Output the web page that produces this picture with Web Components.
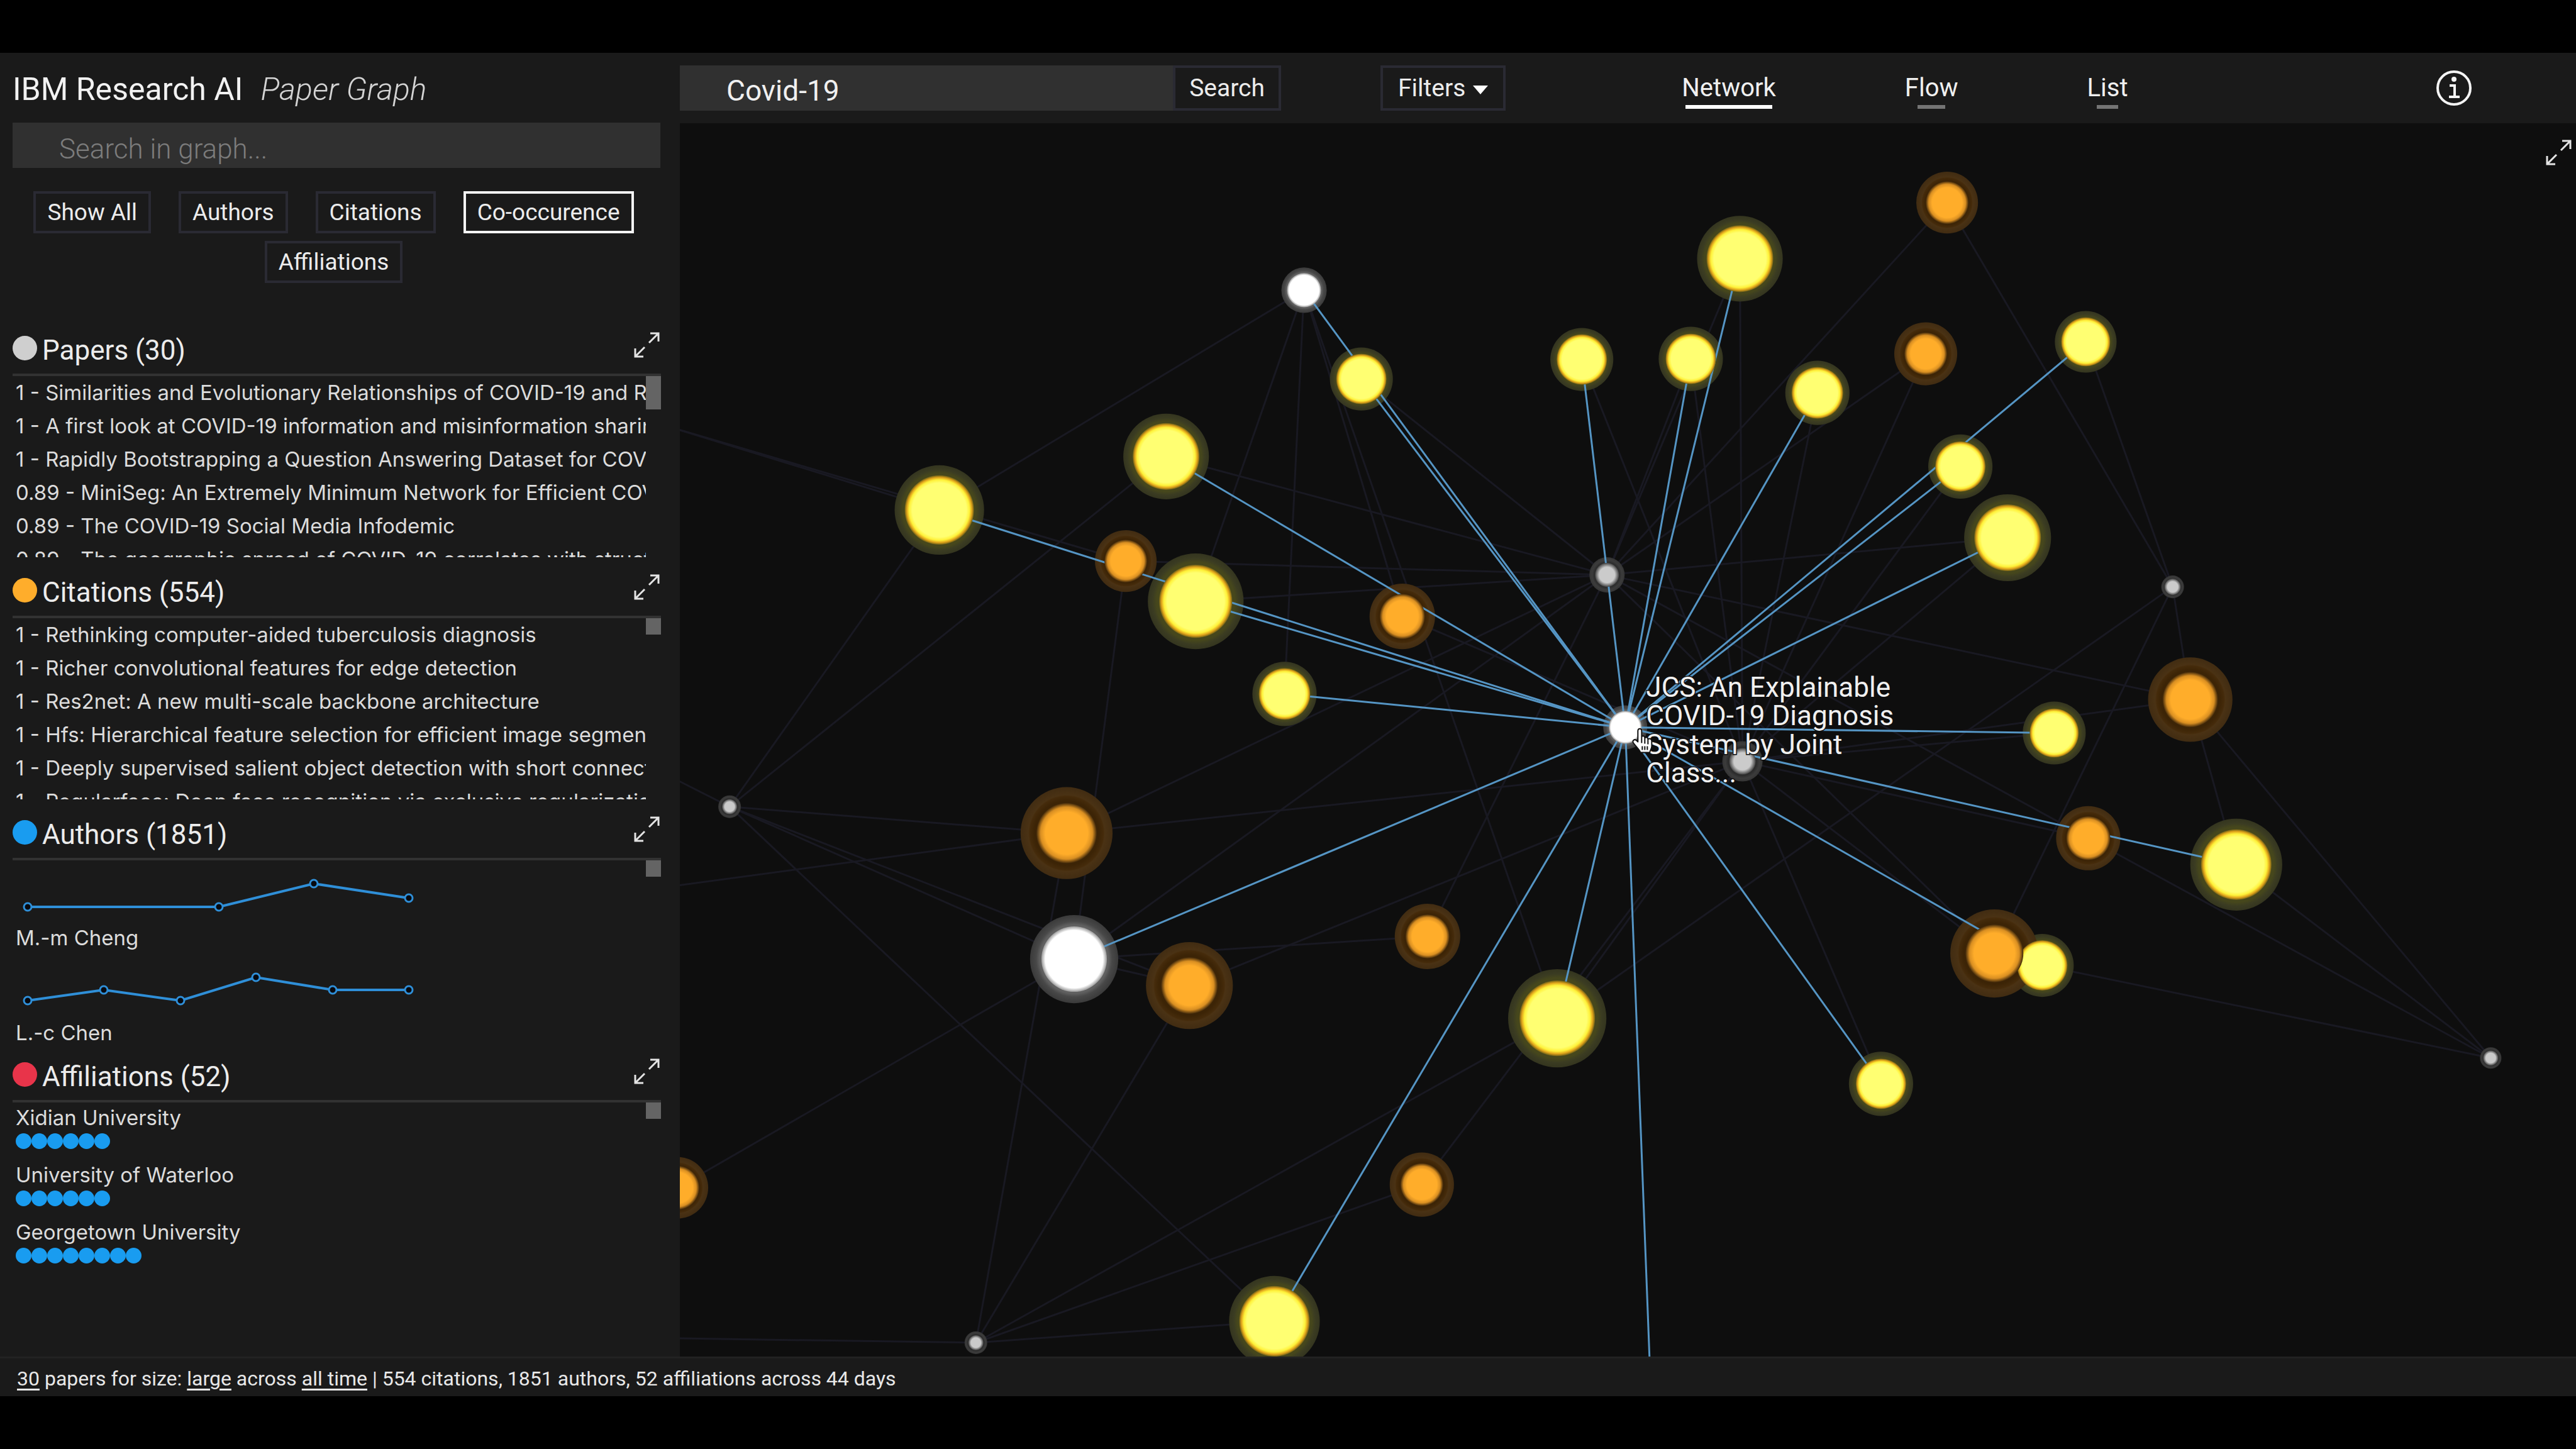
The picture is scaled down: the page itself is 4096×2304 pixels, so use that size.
<!DOCTYPE html>
<html lang="en">
<head>
<meta charset="utf-8">
<title>IBM Research AI Paper Graph</title>
<style>
  html, body { height: 100%; }
  body { margin: 0; background: #000; color: #e8e8e8; font-family: Roboto, "Liberation Sans", sans-serif; }
</style>
</head>
<body>
<paper-graph-app></paper-graph-app>
<script>
const define = (name, html, setup) => {
  const template = document.createElement('template');
  template.innerHTML = html;
  customElements.define(name, class extends HTMLElement {
    constructor() {
      super();
      this.attachShadow({ mode: 'open' }).appendChild(template.content.cloneNode(true));
    }
    connectedCallback() {
      if (setup && !this.ready) { this.ready = true; setup(this, this.shadowRoot); }
    }
  });
};

/* Expand arrows, used by every panel and by the graph */
define('expand-button', `
  <style>
    :host { display: block; }
    button { display: block; margin: 0; padding: 0; border: 0; background: none; cursor: pointer; }
    svg { display: block; width: 41px; height: 41px; fill: none; stroke: #e4e4e4; stroke-width: 3; }
  </style>
  <button type="button" aria-label="Expand">
    <svg viewBox="0 0 41 41"><path d="M26 2H39V15M39 2L24 17M2 26V39H15M2 39L17 24"/></svg>
  </button>`);

/* Outlined text button */
define('text-button', `
  <style>
    :host { display: block; }
    button {
      display: flex; align-items: center; gap: 12px; height: var(--button-height, 67px);
      padding: 0 var(--button-padding, 18px); border: 4px solid #2a2a33; background: #1a1a1a; color: #ececec;
      font: var(--button-size, 37px) Roboto, "Liberation Sans", sans-serif; cursor: pointer;
    }
    :host([active]) button { border-color: #f4f4f4; }
  </style>
  <button type="button"><slot></slot></button>`);

define('side-panel', `
  <style>
    :host { display: block; margin-bottom: 33px; }
    header { display: flex; align-items: flex-start; box-sizing: border-box; height: 64px; border-bottom: 4px solid #323232; }
    .dot { width: 39px; height: 39px; margin-right: 8px; border-radius: 50%; background: var(--dot); }
    h2 { flex: 1; margin: 0; font-size: 44px; line-height: 46px; font-weight: 400; color: #ececec; }
    expand-button { margin: -6px 2px 0 0; }
    .body { display: flex; align-items: flex-start; height: 288px; overflow: hidden; }
    .content { flex: 1; min-width: 0; height: 288px; padding-left: 5px; overflow: hidden; }
    .thumb { width: 24px; height: var(--thumb, 26px); background: #646464; }
  </style>
  <header><span class="dot"></span><h2><slot name="title"></slot></h2><expand-button></expand-button></header>
  <div class="body"><div class="content"><slot></slot></div><div class="thumb"></div></div>`);

define('title-list', `
  <style>
    :host { display: block; }
    ul { margin: 0; padding: 0; list-style: none; font: 33px/53px Inter, "Liberation Sans", sans-serif; color: #dcdcdc; }
    li { white-space: nowrap; }
  </style>
  <ul></ul>`, (el, root) => {
  const ul = root.querySelector('ul');
  for (const text of el.getAttribute('items').split('|')) {
    const li = document.createElement('li');
    li.textContent = text;
    ul.appendChild(li);
  }
});

/* Author with a small publication trend line */
define('author-trend', `
  <style>
    :host { display: block; padding-bottom: 3px; font: 33px/50px Inter, "Liberation Sans", sans-serif; color: #dcdcdc; }
    svg { display: block; width: 660px; height: 98px; fill: none; stroke: #2f8fd8; stroke-width: 4; }
    circle { fill: #07090f; stroke-width: 3; }
  </style>
  <svg viewBox="0 0 660 98"><polyline/></svg><slot></slot>`, (el, root) => {
  const svg = root.querySelector('svg');
  svg.firstChild.setAttribute('points', el.getAttribute('points'));
  for (const pair of el.getAttribute('points').split(' ')) {
    const [x, y] = pair.split(',');
    const c = document.createElementNS('http://www.w3.org/2000/svg', 'circle');
    c.setAttribute('cx', x); c.setAttribute('cy', y); c.setAttribute('r', 6);
    svg.appendChild(c);
  }
});

define('affiliation-row', `
  <style>
    :host { display: block; margin-bottom: 17px; font: 33px/49px Inter, "Liberation Sans", sans-serif; color: #dcdcdc; }
    .dots { display: flex; }
    i { width: 25px; height: 25px; border-radius: 50%; background: #199cf0; }
  </style>
  <slot></slot><div class="dots"></div>`, (el, root) => {
  root.querySelector('.dots').innerHTML = '<i></i>'.repeat(+el.getAttribute('count'));
});

define('graph-sidebar', `
  <style>
    :host { display: block; box-sizing: border-box; padding: 28px 30px 0 20px; background: #1a1a1a; overflow: hidden; }
    h1 { display: flex; align-items: baseline; gap: 28px; margin: 0; font-size: 50px; line-height: 60px; font-weight: 400; color: #f2f2f2; }
    h1 em { font-weight: 300; color: #d4d4d4; }
    input {
      display: block; box-sizing: border-box; width: calc(100% - 1px); height: 72px; margin: 23px 0 37px; padding: 12px 74px 0;
      border: 0; border-radius: 0; background: #303030; color: #e8e8e8; font: 300 44px Roboto, "Liberation Sans", sans-serif;
    }
    input::placeholder { color: #7c7c7c; opacity: 1; }
    .filters { display: flex; flex-wrap: wrap; justify-content: center; gap: 12px 44px; margin: 0 40px 84px 30px; }
  </style>
  <h1>IBM Research AI <em>Paper Graph</em></h1>
  <input type="search" placeholder="Search in graph..." aria-label="Search in graph">
  <div class="filters">
    <text-button>Show All</text-button>
    <text-button>Authors</text-button>
    <text-button>Citations</text-button>
    <text-button active>Co-occurence</text-button>
    <text-button>Affiliations</text-button>
  </div>
  <side-panel style="--dot:#cfcfcf; --thumb:53px">
    <span slot="title">Papers (30)</span>
    <title-list items="1 - Similarities and Evolutionary Relationships of COVID-19 and Related Viruses|1 - A first look at COVID-19 information and misinformation sharing on Twitter|1 - Rapidly Bootstrapping a Question Answering Dataset for COVID-19|0.89 - MiniSeg: An Extremely Minimum Network for Efficient COVID-19 Segmentation|0.89 - The COVID-19 Social Media Infodemic|0.89 - The geographic spread of COVID-19 correlates with structure of social networks"></title-list>
  </side-panel>
  <side-panel style="--dot:#ffad2b">
    <span slot="title">Citations (554)</span>
    <title-list items="1 - Rethinking computer-aided tuberculosis diagnosis|1 - Richer convolutional features for edge detection|1 - Res2net: A new multi-scale backbone architecture|1 - Hfs: Hierarchical feature selection for efficient image segmentation|1 - Deeply supervised salient object detection with short connections|1 - Regularface: Deep face recognition via exclusive regularization"></title-list>
  </side-panel>
  <side-panel style="--dot:#199cf0">
    <span slot="title">Authors (1851)</span>
    <author-trend points="19,74 323,74 474,37 625,60">M.-m Cheng</author-trend>
    <author-trend points="19,72 140,55 262,72 382,35 504,55 625,55">L.-c Chen</author-trend>
  </side-panel>
  <side-panel style="--dot:#e8344a">
    <span slot="title">Affiliations (52)</span>
    <affiliation-row count="6">Xidian University</affiliation-row>
    <affiliation-row count="6">University of Waterloo</affiliation-row>
    <affiliation-row count="8">Georgetown University</affiliation-row>
  </side-panel>`);

define('top-bar', `
  <style>
    :host { display: flex; align-items: center; box-sizing: border-box; height: 112px; padding-right: 165px; background: #1a1a1a; --button-height: 72px; --button-size: 39px; }
    form { display: flex; width: 956px; margin-right: 158px; }
    input {
      flex: 1; min-width: 0; box-sizing: border-box; height: 72px; padding: 8px 74px 0; border: 0; border-radius: 0;
      background: #303030; color: #f0f0f0; font: 46px Roboto, "Liberation Sans", sans-serif;
    }
    form text-button { --button-padding: 22px; }
    .filters { --button-padding: 24px; }
    .filters svg { display: inline-block; width: 24px; height: 14px; margin-left: 12px; vertical-align: middle; fill: #fff; }
    nav { display: flex; gap: 205px; margin-left: 280px; }
    a { display: flex; flex-direction: column; align-items: center; gap: 6px; padding-top: 11px; color: #f0f0f0; font-size: 40px; line-height: 42px; text-decoration: none; }
    a::after { content: ""; width: 52%; height: 6px; background: #747474; }
    a.current::after { width: 92%; background: #fff; }
    .info { margin: 0 0 0 auto; padding: 0; border: 0; background: none; cursor: pointer; }
    .info svg { display: block; width: 58px; height: 58px; }
  </style>
  <form onsubmit="return false">
    <input type="text" value="Covid-19" aria-label="Search papers">
    <text-button>Search</text-button>
  </form>
  <text-button class="filters"><span>Filters<svg viewBox="0 0 24 14"><path d="M0 0H24L12 14Z"/></svg></span></text-button>
  <nav><a class="current" href="#network">Network</a><a href="#flow">Flow</a><a href="#list">List</a></nav>
  <button class="info" type="button" aria-label="Information">
    <svg viewBox="0 0 58 58" fill="none" stroke="#f4f4f4" stroke-width="4"><circle cx="29" cy="29" r="26"/><path d="M22 25H30V43M21 43H38"/><circle cx="29" cy="15" r="4" fill="#f4f4f4" stroke="none"/></svg>
  </button>`);

/* Graph data: kind, centre, halo radius, core radius */
const NODES = {
  W1: ['white', 2071, 461, 36, 27], Y1: ['yellow', 2162, 602, 50, 40], Y2: ['yellow', 2512, 571, 50, 40],
  Y3: ['yellow', 1852, 725, 68, 53], Y4: ['yellow', 1492, 810, 71, 55], O1: ['orange', 1788, 891, 49, 34],
  Y5: ['yellow', 1899, 955, 76, 58], O2: ['orange', 2227, 979, 52, 36], Y6: ['yellow', 2040, 1102, 51, 41],
  G1: ['grey', 2552, 913, 28, 19], G2: ['grey', 2767, 1209, 32, 21], Y7: ['yellow', 2763, 411, 68, 53],
  Y8: ['yellow', 2685, 570, 51, 40], Y9: ['yellow', 2886, 624, 51, 41], O3: ['orange', 3092, 322, 49, 34],
  O4: ['orange', 3058, 562, 50, 34], Y10: ['yellow', 3312, 543, 49, 39], Y11: ['yellow', 3113, 741, 51, 40],
  Y12: ['yellow', 3188, 854, 69, 53], G3: ['grey', 3450, 932, 18, 13], O5: ['orange', 3478, 1111, 67, 44],
  Y13: ['yellow', 3262, 1164, 50, 39], O6: ['orange', 3316, 1331, 51, 35], Y14: ['yellow', 3551, 1373, 73, 56],
  Y15: ['yellow', 3243, 1533, 50, 40], O7: ['orange', 3167, 1514, 70, 46], Y16: ['yellow', 2987, 1721, 51, 40],
  G4: ['grey', 3955, 1680, 17, 12], G5: ['grey', 1159, 1281, 18, 12], O8: ['orange', 1694, 1323, 73, 48],
  W2: ['white', 1706, 1523, 70, 52], O9: ['orange', 1889, 1565, 69, 45], O10: ['orange', 2267, 1487, 52, 35],
  Y17: ['yellow', 2473, 1617, 78, 60], O11: ['orange', 1076, 1886, 49, 35], O12: ['orange', 2258, 1881, 51, 34],
  Y18: ['yellow', 2024, 2098, 72, 56], G6: ['grey', 1550, 2132, 18, 12], H: ['white', 2581, 1155, 35, 26]
};
/* Neighbours that lie outside the visible canvas */
const OUTSIDE = { L1: [1070, 680], L2: [1070, 1236], L3: [1070, 1407], L4: [1070, 2125], B1: [2625, 2300] };
const ACTIVE = 'W1 Y1 Y2 Y3 Y4 Y5 Y6 Y7 Y8 Y9 Y10 Y11 Y12 Y13 Y14 Y15 Y16 Y17 Y18 W2 B1'.split(' ').map(n => 'H-' + n);
const QUIET = ('W1-Y4 W1-Y5 W1-Y6 W1-O2 W1-Y17 Y3-G1 O1-G1 Y5-G1 Y1-G1 Y4-G5 Y3-G5 L1-Y4 L1-O1 O1-W2 G1-O8 G1-W2 G1-O10 ' +
  'O8-G6 O9-G6 Y17-G6 O12-G6 Y18-G6 L4-G6 W2-O11 W2-O10 W2-O9 G5-O8 G5-W2 G5-O9 G5-Y18 G5-L2 O8-L3 O8-G2 O9-G2 Y17-G2 ' +
  'O12-G2 Y17-G3 O2-G2 G1-Y12 G1-O4 G1-O3 G1-Y8 G1-Y7 G1-O5 G1-O6 G1-O7 G2-Y2 G2-Y8 G2-Y7 G2-Y9 G2-O4 G2-Y11 G2-Y12 ' +
  'G2-Y13 G2-O5 G2-O6 G2-O7 G2-Y16 G3-O3 G3-Y10 G3-O5 G3-O7 G4-O5 G4-Y14 G4-O6 G4-Y15 O5-Y14').split(' ');

define('network-graph', `
  <style>
    :host { display: block; position: relative; background: #0e0e0e; overflow: hidden; min-height: 0; }
    svg.canvas { display: block; width: 100%; height: 100%; }
    expand-button { position: absolute; top: 26px; right: 7px; }
    .quiet { stroke: #191922; stroke-width: 3; }
    .active { stroke: #5595c4; stroke-width: 3; }
    text { font: 44px Roboto, "Liberation Sans", sans-serif; fill: #f0f0f0; stroke: #0e0e0e; stroke-width: 3; paint-order: stroke; }
  </style>
  <svg class="canvas" viewBox="1080 196 3012 1958" preserveAspectRatio="xMinYMin slice">
    <defs>
      <radialGradient id="yellow"><stop offset=".78" stop-color="#ffff72"/><stop offset=".87" stop-color="#fff23a"/><stop offset=".94" stop-color="#dfa21a"/><stop offset="1" stop-color="#6e6018"/></radialGradient>
      <radialGradient id="orange"><stop offset=".7" stop-color="#ffad2a"/><stop offset=".86" stop-color="#d98f22"/><stop offset="1" stop-color="#40280a"/></radialGradient>
      <radialGradient id="grey"><stop offset=".65" stop-color="#cbcbcb"/><stop offset="1" stop-color="#444"/></radialGradient>
      <radialGradient id="white"><stop offset=".88" stop-color="#fff"/><stop offset="1" stop-color="#999"/></radialGradient>
      <radialGradient id="yellow-halo"><stop offset=".82" stop-color="#46471c"/><stop offset=".9" stop-color="#3b3c22"/><stop offset="1" stop-color="#34351f"/></radialGradient>
      <radialGradient id="orange-halo"><stop offset=".7" stop-color="#3c2406"/><stop offset=".8" stop-color="#452b0b"/><stop offset=".83" stop-color="#4a3214"/><stop offset="1" stop-color="#412c12"/></radialGradient>
      <radialGradient id="grey-halo"><stop offset=".7" stop-color="#2c2c2c"/><stop offset=".85" stop-color="#3c3c3c"/><stop offset="1" stop-color="#343434"/></radialGradient>
      <radialGradient id="white-halo"><stop offset=".78" stop-color="#606060"/><stop offset=".86" stop-color="#484848"/><stop offset="1" stop-color="#3a3a3a"/></radialGradient>
    </defs>
    <g class="quiet"></g><g class="halos"></g><g class="active"></g><g class="cores"></g>
    <text><tspan x="2614" y="1107">JCS: An Explainable</tspan><tspan x="2614" y="1152">COVID-19 Diagnosis</tspan><tspan x="2614" y="1197">System by Joint</tspan><tspan x="2614" y="1242">Class...</tspan></text>
    <path transform="translate(2592 1156)" fill="#fff" stroke="#111" stroke-width="2" stroke-linejoin="round"
      d="M9 22V5C9 0 15 0 15 5V14C16 12 20 12 20 16C22 14 25 15 25 18C27 16 31 17 31 21V29C31 34 28 35 28 39H13C12 35 8 32 2 24C-1 20 4 17 7 20ZM15 14V24M20 16V25M25 18V26M16 29V35M20 29V35M24 29V35"/>
  </svg>
  <expand-button></expand-button>`, (el, root) => {
  const at = id => OUTSIDE[id] || NODES[id].slice(1, 3);
  const draw = edges => edges.map(edge => {
    const [a, b] = edge.split('-').map(at);
    return `<line x1="${a[0]}" y1="${a[1]}" x2="${b[0]}" y2="${b[1]}"/>`;
  }).join('');
  const discs = (index, suffix) => Object.values(NODES).map(n =>
    `<circle cx="${n[1]}" cy="${n[2]}" r="${n[index]}" fill="url(#${n[0]}${suffix})"/>`).join('');
  root.querySelector('.quiet').innerHTML = draw(QUIET);
  root.querySelector('.active').innerHTML = draw(ACTIVE);
  root.querySelector('.halos').innerHTML = discs(3, '-halo');
  root.querySelector('.cores').innerHTML = discs(4, '');
});

define('status-bar', `
  <style>
    :host { display: block; box-sizing: border-box; height: 63px; padding: 7px 27px 0; border-top: 3px solid #222; background: #1a1a1a; color: #e8e8e8; font-size: 32px; line-height: 50px; white-space: nowrap; }
    a { color: inherit; text-underline-offset: 5px; }
  </style>
  <a href="#papers">30</a> papers for size: <a href="#size">large</a> across <a href="#time">all time</a> | 554 citations, 1851 authors, 52 affiliations across 44 days`);

define('paper-graph-app', `
  <style>
    :host { display: flex; flex-direction: column; box-sizing: border-box; height: 100vh; padding: 84px 0; background: #000; }
    .workspace { flex: 1; min-height: 0; display: grid; grid-template-columns: 1081px minmax(0, 1fr); }
    main { display: flex; flex-direction: column; min-height: 0; }
    network-graph { flex: 1; }
  </style>
  <div class="workspace">
    <graph-sidebar></graph-sidebar>
    <main><top-bar></top-bar><network-graph></network-graph></main>
  </div>
  <status-bar></status-bar>`);
</script>
</body>
</html>
